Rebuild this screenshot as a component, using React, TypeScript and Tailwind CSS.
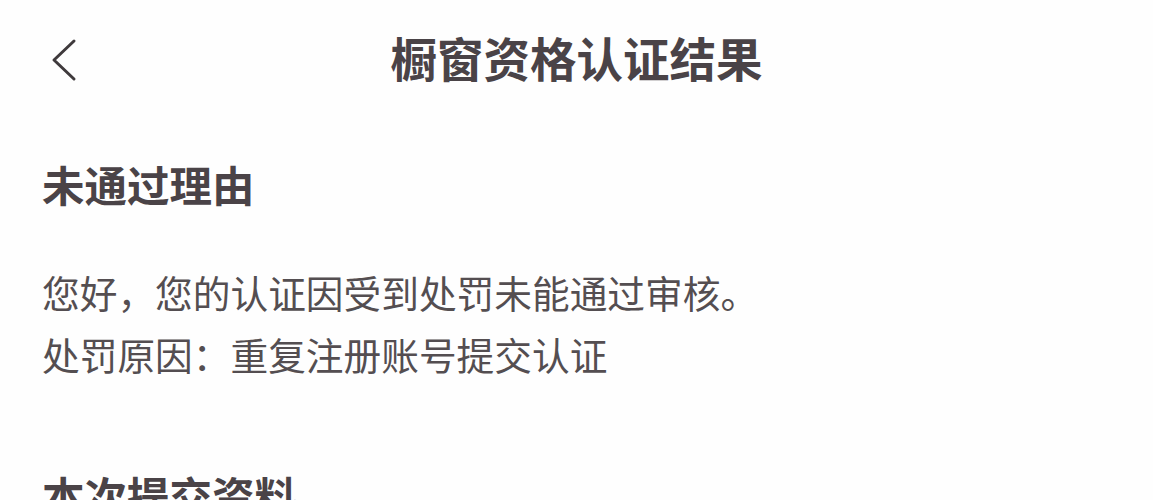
import React from "react";

export default function App() {
  return (
    <div
      className="w-[1153px] h-[500px] overflow-hidden bg-[#fefefe] text-[#4b4548]"
      style={{ fontFamily: '"Noto Sans CJK SC", "Noto Sans", sans-serif' }}
    >
      <div className="grid h-[114px] grid-cols-[1fr_auto_1fr] items-center">
        <div className="flex items-center pl-[50px]">
          <svg width="28" height="44" viewBox="0 0 28 44" fill="none" className="mt-[6px]">
            <path
              d="M24 3 L4 22 L24 41"
              stroke="#3f3a3c"
              strokeWidth="3"
              strokeLinecap="round"
              strokeLinejoin="round"
            />
          </svg>
        </div>
        <h1 className="text-[46.5px] font-semibold leading-[60px] text-[#4a4347]">
          橱窗资格认证结果
        </h1>
        <div />
      </div>

      <div className="px-[42px]">
        <h2 className="mt-[40px] text-[42.5px] font-semibold leading-[60px] text-[#4a4347]">
          未通过理由
        </h2>
        <div className="mt-[47px] text-[37.7px] leading-[62px] text-[#544e51]">
          <p>您好，您的认证因受到处罚未能通过审核。</p>
          <p>处罚原因：重复注册账号提交认证</p>
        </div>
        <h2 className="mt-[80px] text-[42.5px] font-semibold leading-[60px] text-[#4a4347]">
          本次提交资料
        </h2>
      </div>
    </div>
  );
}
